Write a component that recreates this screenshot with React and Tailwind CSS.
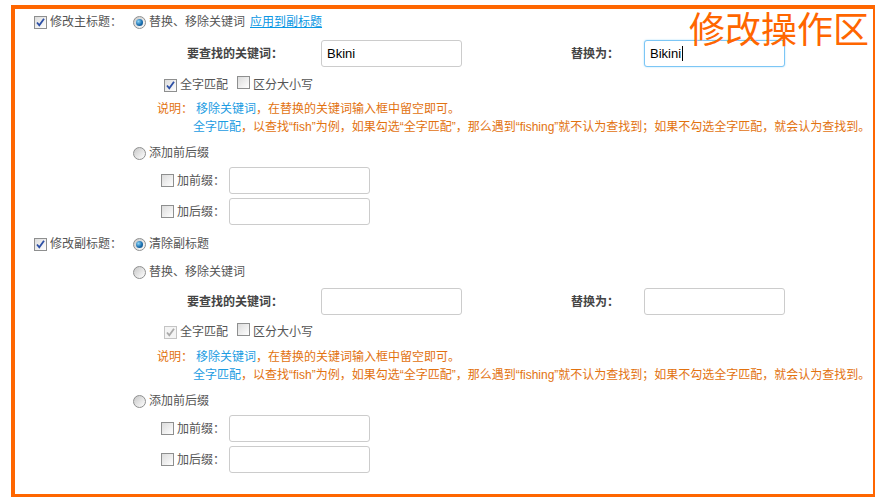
import React from "react";

const FONT = { fontFamily: '"Liberation Sans", "Noto Sans CJK SC", sans-serif' };

const CheckBox = ({ checked, disabled }) => (
  <span
    className={`inline-flex items-center justify-center w-[13px] h-[13px] border shrink-0 ${
      disabled
        ? "border-[#c4c4c4] bg-[#f4f4f4]"
        : "border-[#8e8f8f] bg-gradient-to-br from-[#dcdcdc] to-[#ffffff]"
    }`}
  >
    {checked && (
      <svg width="11" height="11" viewBox="0 0 11 11">
        <path
          d="M2 5.5 L4.3 8.3 L9 1.8"
          fill="none"
          stroke={disabled ? "#a9a9a9" : "#2c4fa5"}
          strokeWidth="1.8"
        />
      </svg>
    )}
  </span>
);

const Radio = ({ checked }) => (
  <span className="inline-flex items-center justify-center w-[13px] h-[13px] rounded-full border border-[#8e8f8f] bg-gradient-to-br from-[#c8c8c8] to-[#ffffff] shrink-0">
    {checked && (
      <span className="w-[7px] h-[7px] rounded-full bg-[radial-gradient(circle_at_35%_35%,#8fd6f7,#1a6fb0_55%,#0b3f72)]" />
    )}
  </span>
);

const Input = ({ value, focused, width = "w-[141px]" }) => (
  <div
    className={`${width} h-[27px] rounded-[3px] border flex items-center pl-[5px] text-[13px] text-black bg-white ${
      focused
        ? "border-[#7cc6f5] shadow-[0_0_2px_#a9dcfb]"
        : "border-[#cccccc]"
    }`}
  >
    {value}
    {focused && <span className="inline-block w-px h-[15px] bg-black ml-px" />}
  </div>
);

const KeywordRow = ({ find, replace, focused }) => (
  <div className="flex items-center h-[27px]">
    <span className="ml-[54px] w-[134px] font-bold text-[#444]">要查找的关键词：</span>
    <Input value={find} />
    <span className="ml-[109px] w-[73px] font-bold text-[#444]">替换为：</span>
    <Input value={replace} focused={focused} />
  </div>
);

const MatchRow = ({ disabled }) => (
  <div className="flex items-center h-[20px] pl-[31px]">
    <CheckBox checked disabled={disabled} />
    <span className="ml-[3px] text-[#555]">全字匹配</span>
    <span className="ml-[9px]">
      <CheckBox />
    </span>
    <span className="ml-[3px] text-[#555]">区分大小写</span>
  </div>
);

const Notes = () => (
  <div className="text-[#e2720f] whitespace-nowrap">
    <div className="h-[18px] flex items-center pl-[24px]">
      说明：<span className="ml-[3px] text-[#1c9ce2]">移除关键词</span>，在替换的关键词输入框中留空即可。
    </div>
    <div className="h-[18px] flex items-center pl-[60px]">
      <span className="text-[#1c9ce2]">全字匹配</span>
      ，以查找“fish”为例，如果勾选“全字匹配”，那么遇到“fishing”就不认为查找到；如果不勾选全字匹配，就会认为查找到。
    </div>
  </div>
);

const AffixRows = () => (
  <>
    <div className="flex items-center h-[20px] mt-[7px]">
      <Radio />
      <span className="ml-[3px] text-[#555]">添加前后缀</span>
    </div>
    {["加前缀：", "加后缀："].map((label) => (
      <div key={label} className="flex items-center h-[27px] mt-[4px] pl-[28px]">
        <CheckBox />
        <span className="ml-[3px] w-[52px] text-[#555]">{label}</span>
        <Input value="" />
      </div>
    ))}
  </>
);

const Section = ({ title, children, className = "" }) => (
  <div className={`flex ${className}`}>
    <div className="w-[118px] pl-[19px] flex items-start">
      <div className="flex items-center h-[26px]">
        <CheckBox checked />
        <span className="ml-[3px] text-[#555]">{title}</span>
      </div>
    </div>
    <div className="flex flex-col">{children}</div>
  </div>
);

export default function App() {
  return (
    <div className="w-[875px] h-[497px] bg-white overflow-hidden text-[12px]" style={FONT}>
      <div className="relative ml-[11px] mt-[5px] w-[866px] h-[493px] border-4 border-[#ff6600]">
        <div className="absolute right-[4px] top-[0px] text-[36px] leading-[44px] text-[#ff6600]">
          修改操作区
        </div>

        <Section title="修改主标题：">
          <div className="flex items-center h-[26px]">
            <Radio checked />
            <span className="ml-[3px] text-[#555]">替换、移除关键词</span>
            <span className="ml-[5px] text-[#0a97e3] underline">应用到副标题</span>
          </div>
          <div className="mt-[5px]">
            <KeywordRow find="Bkini" replace="Bikini" focused />
          </div>
          <div className="mt-[8px]">
            <MatchRow />
          </div>
          <div className="mt-[5px]">
            <Notes />
          </div>
          <AffixRows />
        </Section>

        <Section title="修改副标题：" className="mt-[6px]">
          <div className="flex items-center h-[26px]">
            <Radio checked />
            <span className="ml-[3px] text-[#555]">清除副标题</span>
          </div>
          <div className="flex items-center h-[20px] mt-[5px]">
            <Radio />
            <span className="ml-[3px] text-[#555]">替换、移除关键词</span>
          </div>
          <div className="mt-[6px]">
            <KeywordRow find="" replace="" />
          </div>
          <div className="mt-[7px]">
            <MatchRow disabled />
          </div>
          <div className="mt-[6px]">
            <Notes />
          </div>
          <AffixRows />
        </Section>
      </div>
    </div>
  );
}
